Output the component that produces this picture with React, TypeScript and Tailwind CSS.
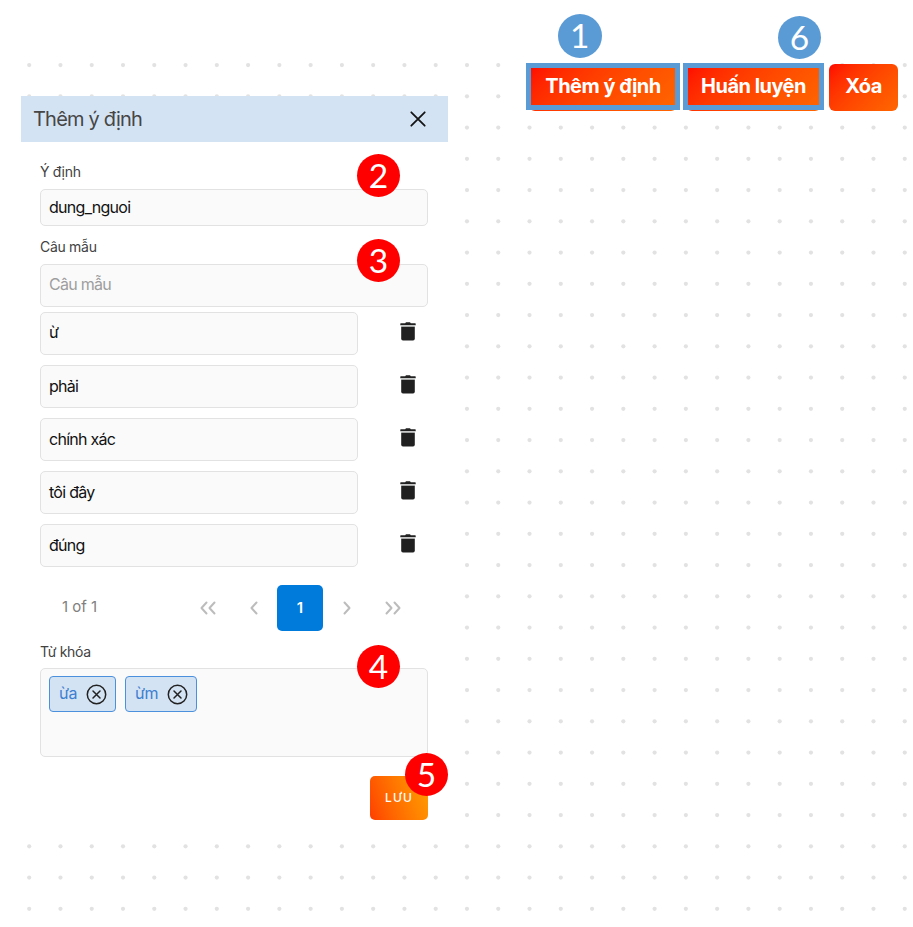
import type { ReactNode } from "react";

const COLS = 29;
const ROWS = 28;
const STEP_X = 31.27;
const STEP_Y = 31.25;

function DotGrid() {
  const dots: ReactNode[] = [];
  for (let r = 0; r < ROWS; r++) {
    for (let c = 0; c < COLS; c++) {
      dots.push(<circle key={`${r}-${c}`} cx={29.2 + c * STEP_X} cy={65.1 + r * STEP_Y} r={2.1} fill="#e2e2e2" />);
    }
  }
  return (
    <svg className="absolute inset-0" width="913" height="927" aria-hidden="true">
      {dots}
    </svg>
  );
}

function Badge({ n, className }: { n: number; className: string }) {
  return (
    <span
      className={`absolute z-10 flex items-center justify-center rounded-full font-[Lato,sans-serif] text-[33.5px] leading-none text-white ${className}`}
    >
      {n}
    </span>
  );
}

function TopButton({ label, width, framed, children }: { label: string; width: string; framed?: boolean; children?: ReactNode }) {
  return (
    <div className={`relative ${width}`}>
      <button className="block h-[46.5px] w-full rounded-md bg-linear-135 from-[#ff0000] to-[#ff6600] pb-[3px] text-xl font-bold tracking-[-0.53px] whitespace-nowrap text-white">
        {label}
      </button>
      {framed && <span className="absolute -top-px -right-[3px] bottom-[0.5px] -left-[3px] border-5 border-[#5b9bd5]" />}
      {children}
    </div>
  );
}

function Trash() {
  return (
    <svg width="16" height="19" viewBox="0 0 16 19" aria-hidden="true">
      <path d="M5.2 1.2 6 .2h4l.8 1H15.2q.5 0 .5.5v1.6H.3V1.7q0-.5.5-.5z" fill="#222" />
      <path d="M1.2 3.6h13.6v1.2H1.2z" fill="#c9cccb" />
      <path d="M1.2 4.8h13.6v11.9q0 1.8-1.8 1.8H3q-1.8 0-1.8-1.8z" fill="#202020" />
    </svg>
  );
}

function Chevrons({ d, w }: { d: string; w: number }) {
  return (
    <svg width={w} height="14" viewBox={`0 0 ${w} 14`} fill="none" stroke="#bcbcbc" strokeWidth="2" strokeLinecap="round" strokeLinejoin="round">
      <path d={d} />
    </svg>
  );
}

function Chip({ label, width }: { label: string; width: string }) {
  return (
    <div className={`flex h-[36px] items-center justify-between rounded-[4px] border border-[#4b90dc] bg-[#d4e3f3] pl-[9px] ${width}`}>
      <span className="pb-[2px] text-base leading-none tracking-[-0.4px] text-[#3d7fd0]">{label}</span>
      <svg width="21" height="21" viewBox="0 0 21 21" fill="none" stroke="#222" strokeWidth="1.5" strokeLinecap="round">
        <circle cx="10.5" cy="10.5" r="9.2" />
        <path d="m7 7 7 7M14 7l-7 7" />
      </svg>
    </div>
  );
}

const field = "rounded-[5px] border border-[#e2e2e2] bg-[#fafafa]";
const label = "text-sm leading-[20px] tracking-[-0.3px] text-[#424242]";
const phrases = ["ừ", "phải", "chính xác", "tôi đây", "đúng"];

export default function App() {
  return (
    <div className="relative h-[927px] w-[913px] overflow-hidden bg-white font-[Inter,sans-serif] text-[#111]">
      <DotGrid />

      <div className="relative flex h-24 items-start justify-end pt-16 pr-[15px]">
        <TopButton label="Thêm ý định" width="w-[148px] mr-[9px]" framed>
          <Badge n={1} className="-top-[50px] left-[29px] size-[43.5px] bg-[#5b9bd5]" />
        </TopButton>
        <TopButton label="Huấn luyện" width="w-[135px] mr-[8px]" framed>
          <Badge n={6} className="-top-[48px] left-[92px] size-[43px] bg-[#5b9bd5]" />
        </TopButton>
        <TopButton label="Xóa" width="w-[69px]" />
      </div>

      <section className="relative ml-[21px] h-[738px] w-[427px] bg-white">
        <header className="flex h-[46px] items-center justify-between bg-[#d4e3f3] pr-[22px] pl-[12px]">
          <h2 className="text-xl leading-none tracking-[-0.8px] text-[#464646]">Thêm ý định</h2>
          <svg width="16" height="16" viewBox="0 0 16 16" fill="none" stroke="#151515" strokeWidth="1.8" strokeLinecap="round">
            <path d="m1.3 1.3 13.4 13.4M14.7 1.3 1.3 14.7" />
          </svg>
        </header>

        <div className="flex flex-col pr-5 pl-[19px]">
          <div className="relative pt-5">
            <div className={label}>Ý định</div>
            <div className={`mt-[7px] flex h-[37px] items-center pb-[2px] pl-2 ${field}`}>
              <span className="text-base leading-none tracking-[-0.72px]">dung_nguoi</span>
            </div>
            <Badge n={2} className="top-[12px] left-[317px] size-[43px] bg-[#ff0000]" />
          </div>

          <div className="relative pt-[11px]">
            <div className={label}>Câu mẫu</div>
            <div className={`mt-[7px] flex h-[43px] items-center pb-[3px] pl-2 ${field}`}>
              <span className="text-base leading-none tracking-[-0.72px] text-[#9e9e9e]">Câu mẫu</span>
            </div>
            <Badge n={3} className="top-[13px] left-[317px] size-[43px] bg-[#ff0000]" />
          </div>

          <ul className="mt-[5px] flex flex-col gap-[10px]">
            {phrases.map((p, i) => (
              <li key={p} className="flex h-[43px] justify-between pr-3">
                <div className={`flex w-[318px] items-center pl-2 ${i === 0 ? "pb-[3px]" : "pb-px"} ${field}`}>
                  <span className="text-base leading-none tracking-[-0.72px]">{p}</span>
                </div>
                <div className="pt-[9.5px]"><Trash /></div>
              </li>
            ))}
          </ul>

          <nav className="mt-[18px] flex h-[46px] items-center pl-[22px] text-[#bcbcbc]">
            <span className="w-[123px] pb-px text-[15px] text-[#808080]">1 of 1</span>
            <div className="flex w-[46px] justify-center"><Chevrons w={16} d="M6.5 1.5 1.5 7l5 5.5M14.5 1.5 9.5 7l5 5.5" /></div>
            <div className="flex w-[46px] justify-center"><Chevrons w={8} d="M6.5 1.5 1.5 7l5 5.5" /></div>
            <span className="flex h-[46px] w-[46px] items-center justify-center rounded-[5px] bg-[#007bdb] text-[15px] font-semibold text-white">1</span>
            <div className="flex w-[46px] justify-center pl-px"><Chevrons w={8} d="m1.5 1.5 5 5.5-5 5.5" /></div>
            <div className="flex w-[46px] justify-center pl-[2px]"><Chevrons w={16} d="m1.5 1.5 5 5.5-5 5.5M9.5 1.5l5 5.5-5 5.5" /></div>
          </nav>

          <div className="relative pt-[11px]">
            <div className={label}>Từ khóa</div>
            <div className={`mt-[6px] flex h-[89px] items-start gap-[9px] pt-[7px] pl-[8px] ${field}`}>
              <Chip label="ừa" width="w-[67px] pr-2" />
              <Chip label="ừm" width="w-[72px] pr-2" />
            </div>
            <Badge n={4} className="top-[14px] left-[317px] size-[43px] bg-[#ff0000]" />
          </div>

          <div className="relative mt-[19px] flex justify-end">
            <button className="h-[43.5px] w-[58px] rounded-[5px] bg-linear-70 from-[#ff3d00] to-[#ffa000] text-xs font-medium tracking-[1.2px] text-white">
              LƯU
            </button>
            <Badge n={5} className="-top-[23px] left-[365px] size-[43px] bg-[#ff0000]" />
          </div>
        </div>
      </section>
    </div>
  );
}
